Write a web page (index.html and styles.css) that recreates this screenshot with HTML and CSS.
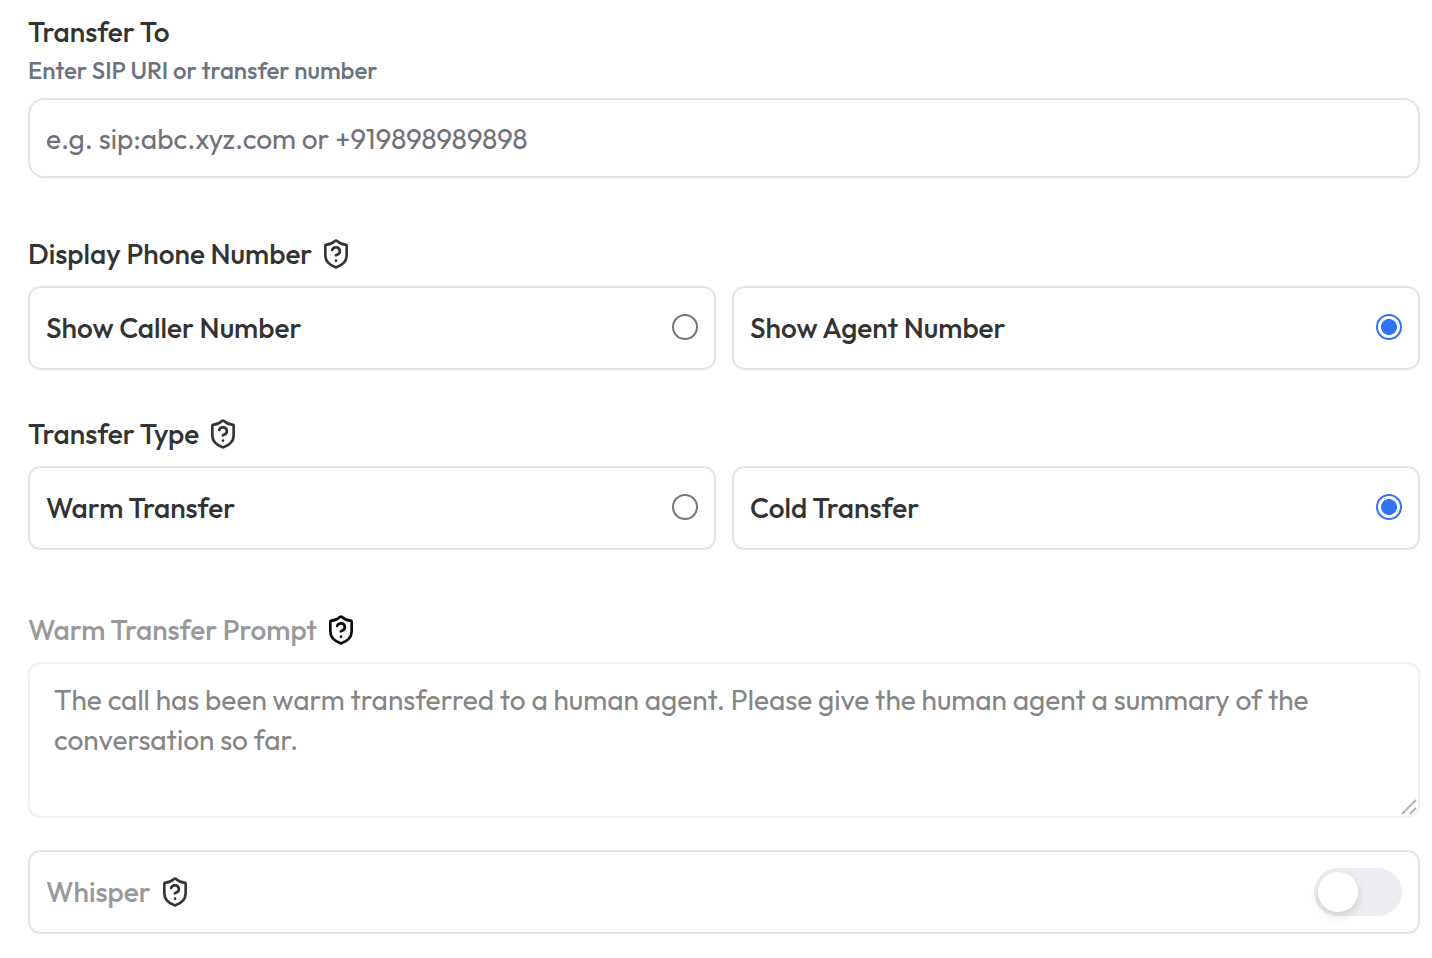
FILE: index.html
```html
<!DOCTYPE html>
<html lang="en">
<head>
  <meta charset="UTF-8">
  <meta name="viewport" content="width=device-width, initial-scale=1.0">
  <title>Call Transfer</title>
  <link rel="stylesheet" href="styles.css">
</head>
<body>
<svg width="0" height="0" class="sprite" aria-hidden="true">
  <symbol id="shieldHelp" viewBox="0 0 24 24">
    <path d="M20 13c0 5-3.5 7.5-7.66 8.95a1 1 0 0 1-.67-.01C7.5 20.5 4 18 4 13V6a1 1 0 0 1 1-1c2 0 4.5-1.2 6.24-2.72a1.17 1.17 0 0 1 1.52 0C14.51 3.81 17 5 19 5a1 1 0 0 1 1 1z"/>
    <path d="M9.1 9a3 3 0 0 1 5.82 1c0 2-3 3-3 3"/>
    <path d="M12 17h.01"/>
  </symbol>
</svg>
<form class="transfer-form">
  <div class="field">
    <label class="title" for="transferTo">Transfer To</label>
    <p class="hint" id="transferHint">Enter SIP URI or transfer number</p>
    <input class="text-input" type="text" id="transferTo" aria-describedby="transferHint" placeholder="e.g. sip:abc.xyz.com or +919898989898">
  </div>

  <fieldset class="field display-field">
    <legend class="title">Display Phone Number <svg class="help"><use href="#shieldHelp"/></svg></legend>
    <div class="options">
      <label class="option">Show Caller Number <input type="radio" name="displayNumber" value="caller"></label>
      <label class="option">Show Agent Number <input type="radio" name="displayNumber" value="agent" checked></label>
    </div>
  </fieldset>

  <fieldset class="field type-field">
    <legend class="title">Transfer Type <svg class="help"><use href="#shieldHelp"/></svg></legend>
    <div class="options">
      <label class="option">Warm Transfer <input type="radio" name="transferType" value="warm"></label>
      <label class="option">Cold Transfer <input type="radio" name="transferType" value="cold" checked></label>
    </div>
  </fieldset>

  <div class="field prompt-field">
    <div class="title">
      <label class="muted" for="warmPrompt">Warm Transfer Prompt</label>
      <svg class="help help-dark"><use href="#shieldHelp"/></svg>
    </div>
    <div class="prompt-wrap">
      <textarea class="prompt" id="warmPrompt" disabled>The call has been warm transferred to a human agent. Please give the human agent a summary of the conversation so far.</textarea>
      <svg class="grip" viewBox="0 0 16 16" aria-hidden="true"><path d="M1 15L15 1M9 15l6-6"/></svg>
    </div>
  </div>

  <div class="option whisper">
    <div class="title">
      <label class="muted" for="whisper">Whisper</label>
      <svg class="help"><use href="#shieldHelp"/></svg>
    </div>
    <input class="switch" type="checkbox" role="switch" id="whisper" disabled>
  </div>
</form>
</body>
</html>
```
FILE: styles.css
```css
* {
  box-sizing: border-box;
}

body {
  margin: 0;
  background-color: #fff;
  color: #333;
  font-family: 'Outfit', 'Lato', sans-serif;
  font-size: 28px;
  line-height: 40px;
}

input, textarea {
  margin: 0;
  font: inherit;
}

.sprite {
  position: absolute;
}

.transfer-form {
  padding: 12px 12px 24px 28px;
}

.field {
  min-width: 0;
  margin: 0;
  padding: 0;
  border: none;
}

.title {
  display: flex;
  align-items: center;
  gap: 8px;
  padding: 0;
  font-weight: 500;
}

.hint {
  margin: 0 0 10px;
  font-size: 24px;
  font-weight: 500;
  line-height: 36px;
  color: #6b7280;
}

.text-input {
  display: block;
  width: 100%;
  height: 80px;
  padding: 0 16px;
  border: 2px solid #e4e4e7;
  border-radius: 16px;
  background-color: #fff;
}

.text-input::placeholder {
  color: #71717a;
  opacity: 1;
}

.help {
  width: 32px;
  height: 32px;
  fill: none;
  stroke: #333;
  stroke-width: 2;
  stroke-linecap: round;
  stroke-linejoin: round;
}

.help-dark {
  stroke: #0a0a0a;
}

.display-field {
  margin-top: 56px;
}

.type-field {
  margin-top: 44px;
}

.prompt-field {
  margin-top: 60px;
}

.options {
  display: grid;
  grid-template-columns: 1fr 1fr;
  gap: 16px;
  margin-top: 12px;
}

.option {
  display: flex;
  align-items: center;
  justify-content: space-between;
  min-height: 84px;
  padding: 0 16px;
  border: 2px solid #e4e4e7;
  border-radius: 12px;
  font-weight: 500;
}

input[type="radio"] {
  appearance: none;
  width: 26px;
  height: 26px;
  margin-bottom: 2px;
  border: 2px solid #767676;
  border-radius: 50%;
  background-color: #fff;
}

input[type="radio"]:checked {
  border-color: #3074f5;
  background-image: radial-gradient(circle closest-side, #3074f5 70%, transparent 74%);
}

.muted {
  color: #999;
}

.prompt-wrap {
  position: relative;
  margin-top: 12px;
}

.prompt {
  display: block;
  width: 100%;
  height: 156px;
  padding: 16px 24px;
  border: 2px solid #f1f1f3;
  border-radius: 12px;
  background-color: #fff;
  color: #858585;
  resize: none;
}

.grip {
  position: absolute;
  right: 3px;
  bottom: 3px;
  width: 16px;
  height: 16px;
  fill: none;
  stroke: #b4b4b4;
  stroke-width: 2;
}

.whisper {
  margin-top: 32px;
}

.switch {
  appearance: none;
  width: 88px;
  height: 48px;
  padding: 4px;
  border-radius: 24px;
  background-color: #ecedf0;
}

.switch::before {
  content: "";
  display: block;
  width: 40px;
  height: 40px;
  border-radius: 50%;
  background-color: #fff;
  box-shadow: 0 4px 8px rgba(0, 0, 0, 0.13);
}

.switch:checked::before {
  margin-left: auto;
}
```
